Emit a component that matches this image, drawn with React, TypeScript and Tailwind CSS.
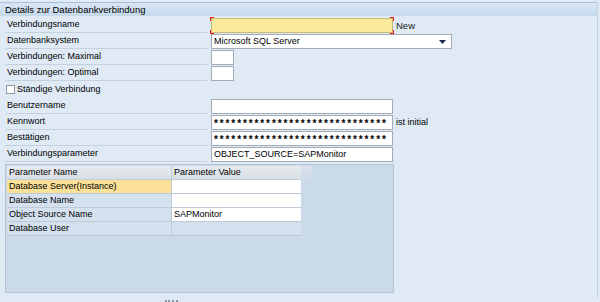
const rows = [
  { name: "Database Server(Instance)", value: "", active: true },
  { name: "Database Name", value: "" },
  { name: "Object Source Name", value: "SAPMonitor" },
  { name: "Database User", value: "", readOnly: true },
];

function Label({ text }: { text: string }) {
  return (
    <div className="w-[202px] h-full flex items-center pl-[2px] border-b border-[#c4d0dc] mr-[4px]">
      {text}
    </div>
  );
}

function Field({ w, children, className = "" }: { w: string; children?: React.ReactNode; className?: string }) {
  return (
    <div className={`${w} h-[15px] self-end border border-[#a3acb6] bg-white flex items-center px-[2px] ${className}`}>
      {children}
    </div>
  );
}

export default function App() {
  return (
    <div className="w-[600px] h-[302px] bg-[#dfeaf5] text-black text-[9px] leading-none font-['Liberation_Sans',Arial,sans-serif] overflow-hidden pt-[2px]">
      <div className="w-[598px] h-[296px] border-r border-[#c2d2e2]">
        {/* Title bar */}
        <div className="h-[14px] border-t border-[#a8c0d8] bg-gradient-to-b from-[#d9e6f3] to-[#c5d8ec] flex items-center pl-[5px] text-[9.5px]">
          Details zur Datenbankverbindung
        </div>

        <div className="pl-[5px] flex flex-col pt-[1px]">
          <div className="h-[16px] flex">
            <Label text="Verbindungsname" />
            <div className="relative w-[182px] h-[15px] self-end border border-[#c9b878] bg-[#fde99c]">
              <span className="absolute -left-[2px] -top-[2px] w-[4px] h-[4px] border-l border-t border-[#e02020]" />
              <span className="absolute -right-[2px] -top-[2px] w-[4px] h-[4px] border-r border-t border-[#e02020]" />
              <span className="absolute -left-[2px] -bottom-[2px] w-[4px] h-[4px] border-l border-b border-[#e02020]" />
              <span className="absolute -right-[2px] -bottom-[2px] w-[4px] h-[4px] border-r border-b border-[#e02020]" />
            </div>
            <span className="self-center ml-[3px] mt-[2px] text-[9.5px] text-[#222]">New</span>
          </div>

          <div className="h-[16px] flex">
            <Label text="Datenbanksystem" />
            <Field w="w-[241px]" className="justify-between">
              <span>Microsoft SQL Server</span>
              <svg width="7" height="4" viewBox="0 0 7 4" className="mr-[3px]">
                <path d="M0 0h7L3.5 4z" fill="#1c2a4a" />
              </svg>
            </Field>
          </div>

          <div className="h-[16px] flex">
            <Label text="Verbindungen: Maximal" />
            <Field w="w-[23px]" />
          </div>

          <div className="h-[16px] flex">
            <Label text="Verbindungen: Optimal" />
            <Field w="w-[23px]" />
          </div>

          <div className="h-[17px] flex items-center">
            <div className="w-[9px] h-[9px] border border-[#8e97a2] bg-white ml-[1px] mr-[2px]" />
            <span>Ständige Verbindung</span>
          </div>

          <div className="h-[16px] flex">
            <Label text="Benutzername" />
            <Field w="w-[182px]" />
          </div>

          <div className="h-[16px] flex">
            <Label text="Kennwort" />
            <Field w="w-[182px]" className="tracking-[1.9px] text-[10px] font-bold overflow-hidden pt-[3px]">
              ******************************
            </Field>
            <span className="self-center ml-[3px] mt-[1px]">ist initial</span>
          </div>

          <div className="h-[16px] flex">
            <Label text="Bestätigen" />
            <Field w="w-[182px]" className="tracking-[1.9px] text-[10px] font-bold overflow-hidden pt-[3px]">
              ******************************
            </Field>
          </div>

          <div className="h-[16px] flex">
            <Label text="Verbindungsparameter" />
            <Field w="w-[182px]" className="bg-[#ebf0f6]">
              OBJECT_SOURCE=SAPMonitor
            </Field>
          </div>

          {/* Parameter table */}
          <div className="mt-[2px] w-[389px] h-[129px] border border-[#b5c5d6] bg-[#cbdae9] p-px">
            <div className="flex">
              <div className="w-[294px] border-b border-[#b6c3d1] bg-[#bfcbd8] grid grid-cols-[164px_129px] gap-px">
                <div className="h-[13px] bg-gradient-to-b from-[#e7ebef] to-[#d9dfe6] flex items-center pl-[2px]">
                  Parameter Name
                </div>
                <div className="h-[13px] bg-gradient-to-b from-[#e7ebef] to-[#d9dfe6] flex items-center pl-[2px]">
                  Parameter Value
                </div>
                {rows.map((r) => (
                  <div key={r.name} className="contents">
                    <div
                      className={`h-[13px] flex items-center pl-[2px] ${
                        r.active ? "bg-[#fbe097]" : "bg-[#d4e0ee]"
                      }`}
                    >
                      {r.name}
                    </div>
                    <div
                      className={`h-[13px] flex items-center pl-[2px] ${
                        r.readOnly ? "bg-[#d4e0ee]" : "bg-white"
                      }`}
                    >
                      {r.value}
                    </div>
                  </div>
                ))}
              </div>
              <div className="w-[11px] h-[13px] bg-gradient-to-b from-[#dbe3ec] to-[#cfdbe8]" />
            </div>
          </div>
        </div>
      </div>
      <div className="ml-[165px] mt-[2px] w-[13px] h-[3px] border-t-2 border-dotted border-[#8a96a4]" />
    </div>
  );
}
